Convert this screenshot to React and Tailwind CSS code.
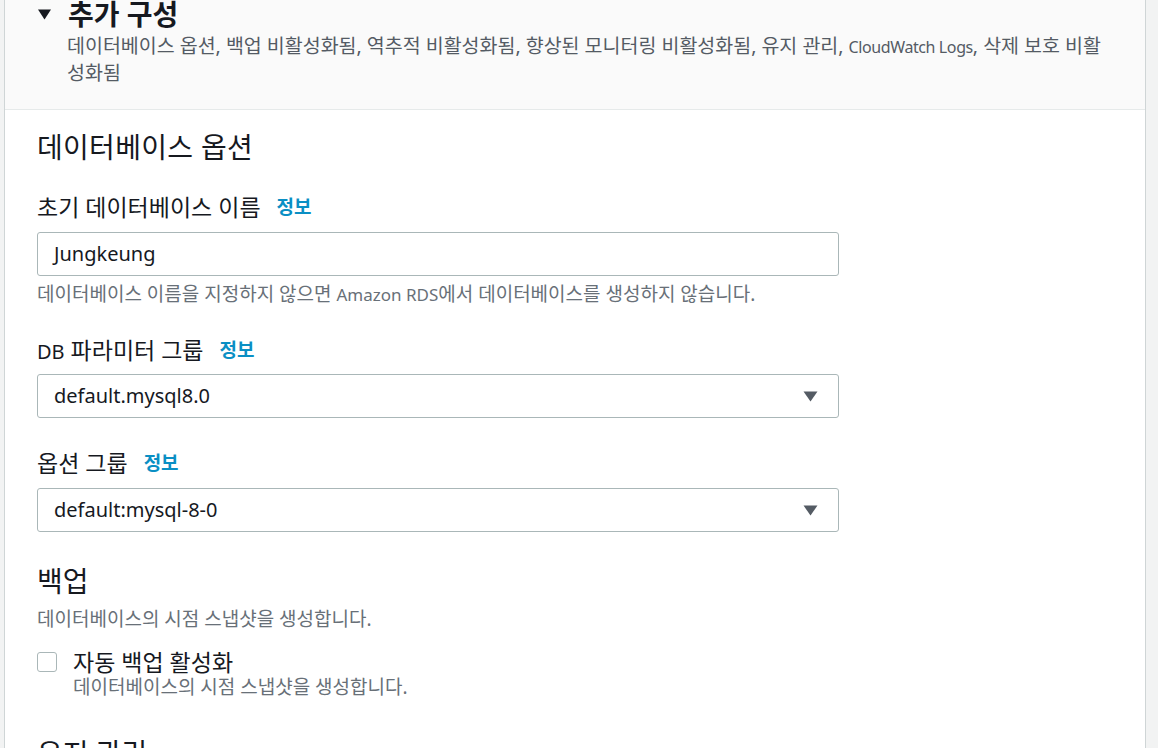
import React from "react";

const font = { fontFamily: "'Noto Sans', 'Noto Sans CJK KR', sans-serif" };

function Caret() {
  return (
    <svg width="15" height="11" viewBox="0 0 15 11" className="shrink-0">
      <path d="M0.5 0.5 H14.5 L7.5 10.5 Z" fill="#545b64" />
    </svg>
  );
}

function Label({ children }) {
  return (
    <div className="flex h-[28px] items-center text-[23px] leading-[28px] text-[#16191f]">
      <span>{children}</span>
      <span className="ml-[16px] text-[19px] font-bold text-[#0a8fc4]">정보</span>
    </div>
  );
}

function Select({ value }) {
  return (
    <div className="flex h-[44px] w-[802px] items-center justify-between rounded-[3px] border border-[#aab7b8] bg-white pl-[16px] pr-[20px] text-[20px] text-[#16191f]">
      <span>{value}</span>
      <Caret />
    </div>
  );
}

export default function App() {
  return (
    <div className="min-h-[748px] w-[1158px] overflow-hidden bg-[#f2f3f3]" style={font}>
      <div className="ml-[4px] w-[1142px] min-h-[748px] border-x border-[#cfd5d6] bg-white">
        <div className="h-[110px] border-b border-[#e6eaea] bg-[#fafafa] pl-[33px] pr-[34px]">
          <div className="flex items-center gap-[17px] leading-[28px]">
            <svg width="13" height="11" viewBox="0 0 13 11">
              <path d="M0 0.5 H13 L6.5 10.5 Z" fill="#16191f" />
            </svg>
            <span className="text-[28px] font-bold text-[#16191f]">추가 구성</span>
          </div>
          <div className="ml-[29px] mt-[4px] text-[19.5px] leading-[27px] text-[#545b64]">
            데이터베이스 옵션, 백업 비활성화됨, 역추적 비활성화됨, 향상된 모니터링 비활성화됨, 유지 관리,{" "}
            <span className="text-[16px] leading-[1] tracking-[-0.4px]">CloudWatch Logs</span>, 삭제 보호 비활성화됨
          </div>
        </div>

        <div className="pl-[32px] pt-[19px]">
          <div className="text-[28px] leading-[36px] tracking-[0.3px] text-[#16191f]">데이터베이스 옵션</div>

          <div className="mt-[28px]">
            <Label>초기 데이터베이스 이름</Label>
          </div>
          <div className="mt-[11px] flex h-[44px] w-[802px] items-center rounded-[3px] border border-[#aab7b8] bg-white pl-[16px] text-[20px] text-[#16191f]">
            Jungkeung
          </div>
          <div className="mt-[6px] h-[24px] text-[19px] leading-[24px] text-[#687078]">
            데이터베이스 이름을 지정하지 않으면 <span className="text-[17px] leading-[1]">Amazon RDS</span>에서 데이터베이스를 생성하지 않습니다.
          </div>

          <div className="mt-[30px]">
            <Label>
              <span className="text-[20px] leading-[1]">DB</span> 파라미터 그룹
            </Label>
          </div>
          <div className="mt-[10px]">
            <Select value="default.mysql8.0" />
          </div>

          <div className="mt-[31px]">
            <Label>옵션 그룹</Label>
          </div>
          <div className="mt-[11px]">
            <Select value="default:mysql-8-0" />
          </div>

          <div className="mt-[31px] text-[28px] leading-[36px] text-[#16191f]">백업</div>
          <div className="mt-[8px] text-[19px] leading-[24px] text-[#687078]">
            데이터베이스의 시점 스냅샷을 생성합니다.
          </div>

          <div className="mt-[18px] flex items-start">
            <div className="mt-[3px] h-[20px] w-[20px] shrink-0 rounded-[3px] border-[1.5px] border-[#aab7b8] bg-white" />
            <div className="ml-[16px]">
              <div className="text-[23px] leading-[26px] text-[#16191f]">자동 백업 활성화</div>
              <div className="text-[19px] leading-[24px] text-[#687078]">
                데이터베이스의 시점 스냅샷을 생성합니다.
              </div>
            </div>
          </div>

          <div className="mt-[36px] text-[28px] leading-[36px] text-[#16191f]">유지 관리</div>
        </div>
      </div>
    </div>
  );
}
